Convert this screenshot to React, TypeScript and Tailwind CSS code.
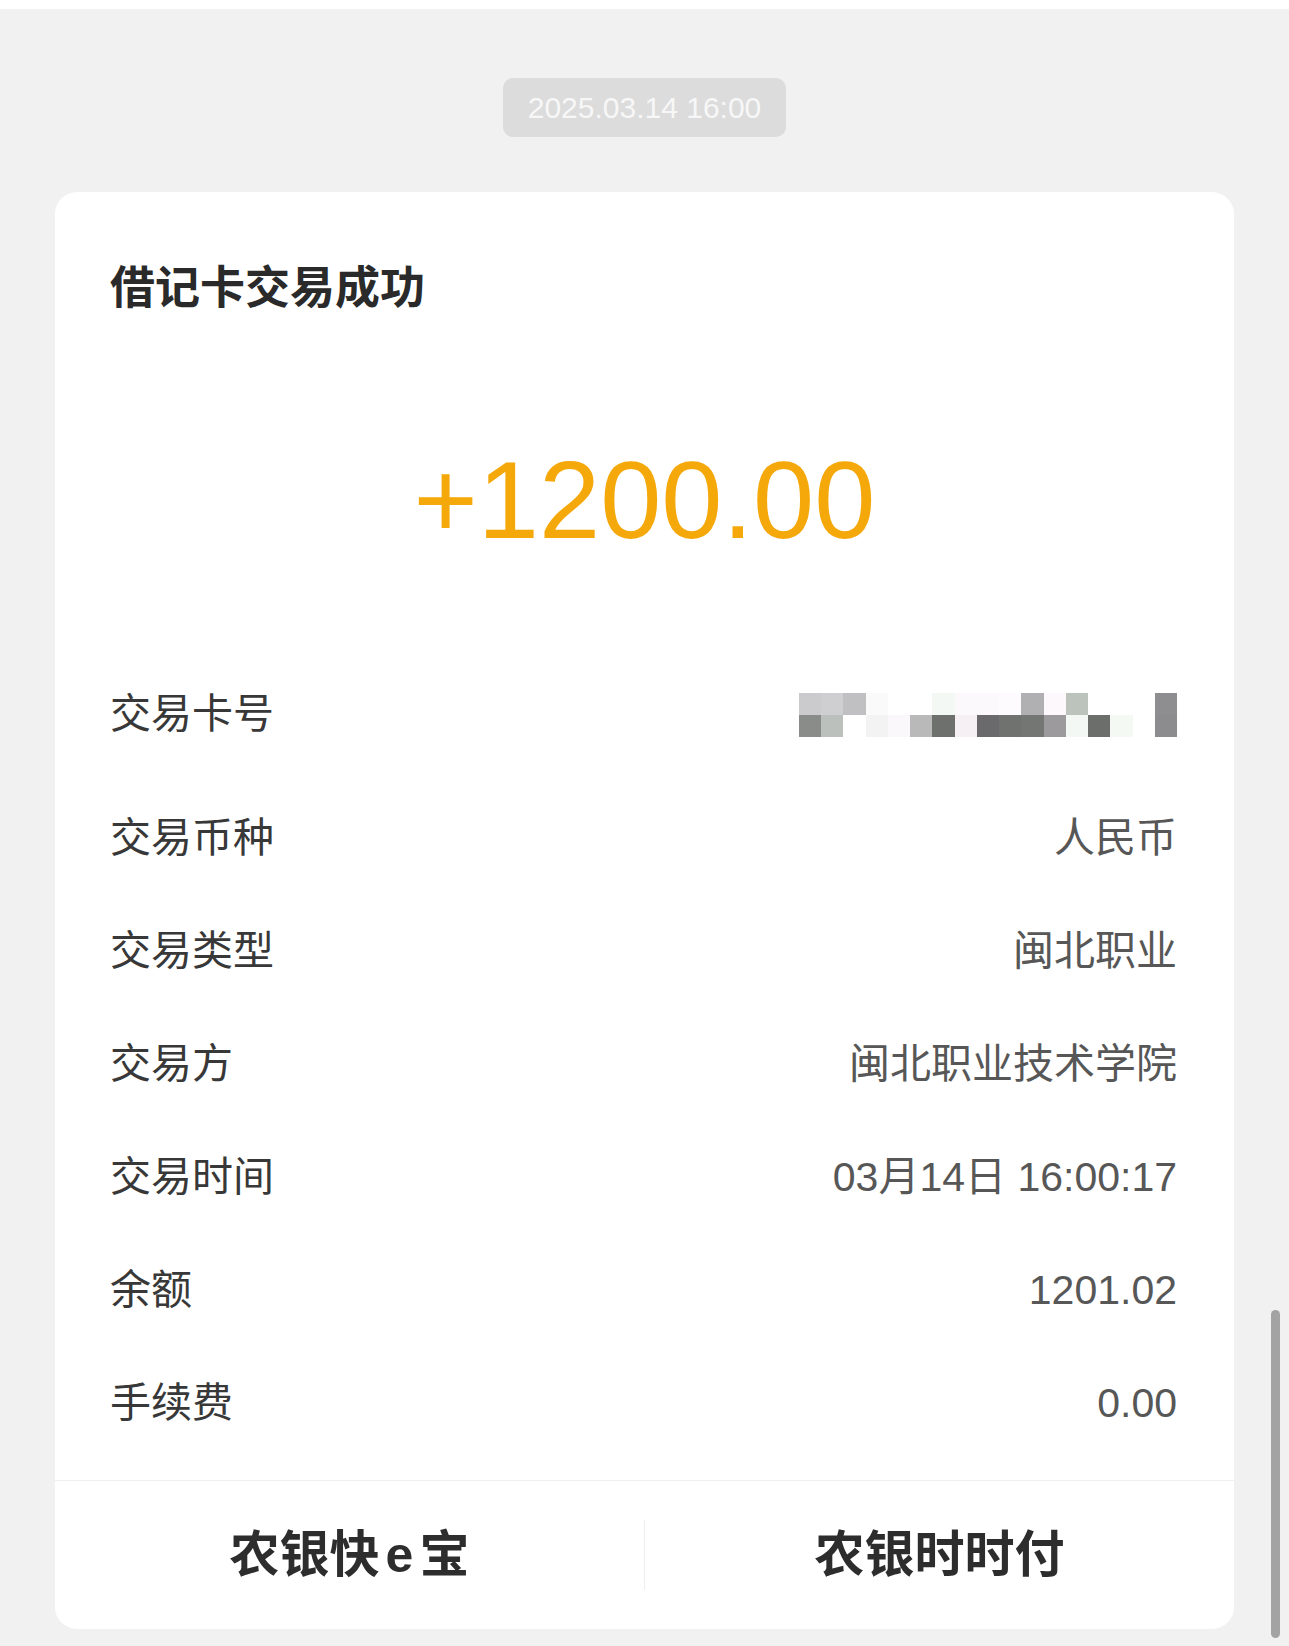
import React from 'react';

const FONT = "font-['Liberation_Sans','Noto_Sans_CJK_SC',sans-serif]";

// pixelated card number, two rows of mosaic blocks
const MOSAIC: string[][] = [
  ['#cbcbcd', '#cfcfd2', '#c0c0c2', '#fafafa', '#ffffff', '#ffffff', '#f4f8f4', '#fcf9fc', '#fcf9fc', '#fdfbfd', '#b0afb2', '#fcf8fb', '#bcc2bc', '#ffffff', '#ffffff', '#ffffff', '#8e8e90'],
  ['#8a8c8a', '#bcc0bc', '#ffffff', '#f3f3f3', '#fbf8fb', '#b9b9b9', '#6e706e', '#f6eff3', '#6a6a6c', '#707270', '#747674', '#9c9a9c', '#f4f8f4', '#6c6e6c', '#f4f9f4', '#ffffff', '#8c8c8e'],
];

const ROWS: Array<{ label: string; value: string }> = [
  { label: '交易币种', value: '人民币' },
  { label: '交易类型', value: '闽北职业' },
  { label: '交易方', value: '闽北职业技术学院' },
  { label: '交易时间', value: '03月14日 16:00:17' },
  { label: '余额', value: '1201.02' },
  { label: '手续费', value: '0.00' },
];

const CardMosaic: React.FC = () => (
  <svg width="378" height="44" viewBox="0 0 17 2" preserveAspectRatio="none" shapeRendering="crispEdges">
    {MOSAIC.map((row, y) =>
      row.map((fill, x) => <rect key={`${x}-${y}`} x={x} y={y} width="1.02" height="1.02" fill={fill} />),
    )}
  </svg>
);

export default function App() {
  return (
    <div className={`relative min-h-[1646px] bg-[#f1f1f1] ${FONT}`}>
      <div className="h-[9px] bg-white" />

      <div className="mt-[69px] flex justify-center">
        <div className="flex h-[59px] w-[283px] items-center justify-center rounded-[10px] bg-[#dcdcdc] text-[30px] text-[#f7f7f7]">
          2025.03.14 16:00
        </div>
      </div>

      <div className="mx-[55px] mt-[55px] overflow-hidden rounded-[22px] bg-white">
        <div className="px-[55px] pt-[71px]">
          <h1 className="text-[45px] font-bold leading-[52px] text-[#2a2a2a]">借记卡交易成功</h1>
        </div>

        <div className="mt-[130px] text-center text-[110px] leading-none text-[#f5a80a]">+1200.00</div>

        <div className="mt-[103px] pb-[20px] pl-[55px] pr-[57px]">
          <div className="mb-[11px] flex h-[113px] items-center justify-between">
            <span className="text-[41px] text-[#383838]">交易卡号</span>
            <CardMosaic />
          </div>
          {ROWS.map((row) => (
            <div key={row.label} className="flex h-[113px] items-center justify-between">
              <span className="text-[41px] text-[#383838]">{row.label}</span>
              <span className="text-[41px] text-[#575757]">{row.value}</span>
            </div>
          ))}
        </div>

        <div className="flex h-[149px] border-t border-[#efefef]">
          <button type="button" className="flex flex-1 items-center justify-center text-[50px] font-bold text-[#2d2d2d]">
            农银快<span className="mx-[6px]">e</span>宝
          </button>
          <div className="h-[70px] w-px self-center bg-[#eeeeee]" />
          <button type="button" className="flex flex-1 items-center justify-center text-[50px] font-bold text-[#2d2d2d]">
            农银时时付
          </button>
        </div>
      </div>

      <div className="absolute right-[9px] top-[1310px] h-[328px] w-[9px] rounded-full bg-[#a3a3a3]" />
    </div>
  );
}
